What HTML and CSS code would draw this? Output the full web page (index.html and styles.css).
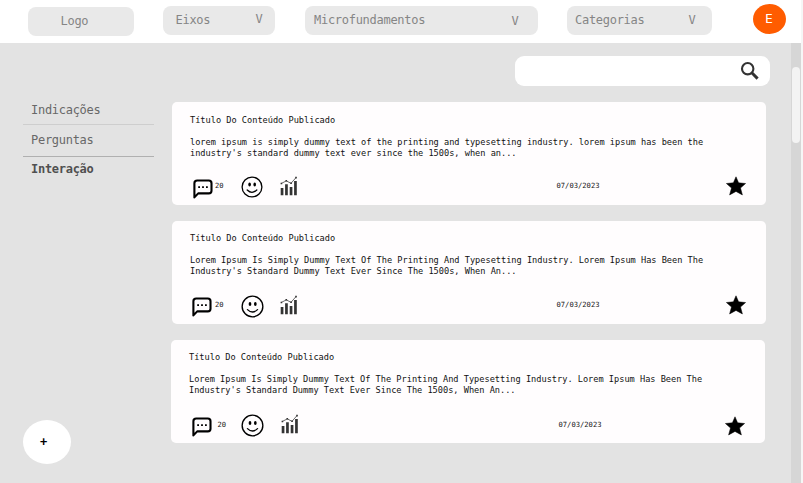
FILE: index.html
```html
<!DOCTYPE html>
<html lang="pt-BR">
<head>
<meta charset="utf-8">
<title>Interação</title>
<link rel="stylesheet" href="styles.css">
</head>
<body>
<svg class="symbols" aria-hidden="true">
  <symbol id="chat" viewBox="0 0 20 20"><path d="M1.4 18.4V4.2Q1.4 1.5 4.2 1.5H15.8Q18.5 1.5 18.5 4.2V11.8Q18.5 14.4 15.8 14.4H5.2Z" fill="none" stroke="#000" stroke-width="2.1" stroke-linejoin="round"/><path d="M5.2 7.2h1.8v1.8H5.200zM9.1 7.2h1.8v1.8H9.100zM13 7.2h1.8v1.8h-1.8z"/></symbol>
  <symbol id="smile" viewBox="0 0 22 22"><circle cx="11" cy="11" r="9.9" fill="none" stroke="#000" stroke-width="1.3"/><ellipse cx="8.6" cy="8.6" rx="1.3" ry="2"/><ellipse cx="13.7" cy="8.6" rx="1.3" ry="2"/><path d="M6.2 14Q11 18.7 15.8 14" fill="none" stroke="#000" stroke-width="1.3" stroke-linecap="round"/></symbol>
  <symbol id="chart" viewBox="0 0 18 20"><path d="M.7 12h2.7v7.2H.7zM5.1 8.300h2.7v10.9H5.1zM9.7 11h2.7v8.2H9.7zM14.1 5h2.7v14.2h-2.7z" fill="#333"/><path d="M1.2 7.500 6.3 4.9 11 7.300 16 1.6" fill="none" stroke="#444" stroke-width=".8"/><path d="M.6 6.800h1.6v1.5H.6zM5.5 4.1h1.6v1.5H5.5zM10.3 6.500h1.6v1.5h-1.6zM15.2 .8h1.6v1.6h-1.6z" fill="#333"/></symbol>
  <symbol id="star" viewBox="0 0 20 20"><path d="M10 .8 12.6 6.8 19.6 7.5 14.5 12 16.4 18.9 10 15.4 3.6 18.9 5.5 12 .4 7.5 7.4 6.8Z" stroke="#000" stroke-width=".5" stroke-linejoin="round"/></symbol>
</svg>
<header class="topbar">
  <div class="pill logo">Logo</div>
  <div class="pill eixos"><span>Eixos</span><span class="caret">V</span></div>
  <div class="pill micro"><span>Microfundamentos</span><span class="caret">V</span></div>
  <div class="pill categorias"><span>Categorias</span><span class="caret">V</span></div>
  <div class="avatar">E</div>
</header>
<div class="page">
  <aside class="sidebar">
    <nav>
      <a class="first">Indicações</a>
      <a class="second">Perguntas</a>
      <a class="active">Interação</a>
    </nav>
    <div class="add">+</div>
  </aside>
  <main class="content">
    <div class="search"><svg viewBox="0 0 20 20"><circle cx="7.7" cy="7.7" r="5.7" fill="none" stroke="#333" stroke-width="2.1"/><path d="M11.8 11.8 17.6 17.600" stroke="#333" stroke-width="3"/></svg></div>
    <article class="card top">
      <h2>Título Do Conteúdo Publicado</h2>
      <p>lorem ipsum is simply dummy text of the printing and typesetting industry. lorem ipsum has been the<br>industry's standard dummy text ever since the 1500s, when an...</p>
      <footer><svg class="chat"><use href="#chat"/></svg><span class="count">20</span><svg class="smile"><use href="#smile"/></svg><svg class="chart"><use href="#chart"/></svg><time>07/03/2023</time><svg class="star"><use href="#star"/></svg></footer>
    </article>
    <article class="card middle">
      <h2>Título Do Conteúdo Publicado</h2>
      <p>Lorem Ipsum Is Simply Dummy Text Of The Printing And Typesetting Industry. Lorem Ipsum Has Been The<br>Industry's Standard Dummy Text Ever Since The 1500s, When An...</p>
      <footer><svg class="chat"><use href="#chat"/></svg><span class="count">20</span><svg class="smile"><use href="#smile"/></svg><svg class="chart"><use href="#chart"/></svg><time>07/03/2023</time><svg class="star"><use href="#star"/></svg></footer>
    </article>
    <article class="card last">
      <h2>Título Do Conteúdo Publicado</h2>
      <p>Lorem Ipsum Is Simply Dummy Text Of The Printing And Typesetting Industry. Lorem Ipsum Has Been The<br>Industry's Standard Dummy Text Ever Since The 1500s, When An...</p>
      <footer><svg class="chat"><use href="#chat"/></svg><span class="count">20</span><svg class="smile"><use href="#smile"/></svg><svg class="chart"><use href="#chart"/></svg><time>07/03/2023</time><svg class="star"><use href="#star"/></svg></footer>
    </article>
  </main>
  <div class="track"><div class="thumb"></div></div>
</div>
</body>
</html>
```
FILE: styles.css
```css
* { box-sizing: border-box; }
body {
  margin: 0;
  width: 803px;
  height: 483px;
  overflow: hidden;
  background: #f6f6f6;
  font-family: "DejaVu Sans Mono", monospace;
  color: #111;
}
svg { display: block; flex: none; }
.symbols { width: 0; height: 0; position: absolute; }
.topbar {
  display: flex;
  align-items: flex-start;
  width: 801px;
  height: 43px;
  padding: 6px 0 0 27.5px;
  background: #fff;
}
.pill {
  display: flex;
  justify-content: space-between;
  height: 28.5px;
  border-radius: 8px;
  background: #e9e9e9;
  color: #858585;
  font-size: 12px;
  letter-spacing: -.28px;
  line-height: 29px;
}
.logo { width: 106.500px; margin: 1px 29px 0 0; padding-left: 33px; line-height: 28px; }
.eixos { width: 112px; margin-right: 29.500px; padding: 0 12.5px; }
.eixos .caret { line-height: 27px; }
.micro { width: 233px; margin-right: 29px; padding: 0 19px 0 9.5px; }
.categorias { width: 145.500px; margin-right: 40.500px; padding: 0 16.500px 0 8.500px; }
.micro .caret { line-height: 30px; }
.avatar {
  width: 33px;
  height: 30px;
  margin-top: -2.500px;
  border-radius: 50%;
  background: #ff5c00;
  color: #fff;
  font-size: 13px;
  line-height: 30px;
  text-align: center;
}
.page { display: flex; width: 801px; height: 440px; background: #e3e3e3; }
.sidebar {
  display: flex;
  flex-direction: column;
  justify-content: space-between;
  width: 171px;
  padding: 53px 17px 19px 23px;
}
.sidebar a {
  display: block;
  padding-left: 8px;
  color: #686868;
  font-size: 12px;
  letter-spacing: -.28px;
  line-height: 28px;
}
.sidebar .first { border-bottom: 1px solid #cecece; }
.sidebar .second { height: 32px; border-bottom: 1px solid #b0b0b0; line-height: 30px; }
.sidebar .active { color: #505050; font-weight: bold; line-height: 25px; }
.add {
  width: 48px;
  height: 44px;
  border-radius: 50%;
  background: #fff;
  color: #000;
  font-size: 12px;
  font-weight: bold;
  line-height: 44px;
  padding-left: 17px;
}
.content { width: 620px; padding-top: 13px; }
.search {
  display: flex;
  justify-content: flex-end;
  width: 255px;
  height: 30px;
  margin: 0 0 16px 344px;
  padding: 5px 10px 0 0;
  border-radius: 9px;
  background: #fff;
}
.search svg { width: 20px; height: 20px; }
.card {
  width: 593.500px;
  height: 103px;
  margin: 0 0 16px 1px;
  padding: 12px 0 0 18px;
  border-radius: 5px;
  background: #fffdfe;
}
.card h2, .card p { margin: 0; font-size: 8.62px; font-weight: normal; line-height: 11px; white-space: nowrap; }
.card h2 { margin-bottom: 11px; }
.card footer { display: flex; align-items: flex-start; padding-top: 16px; }
.top { padding-top: 13px; }
.chat { width: 20px; height: 20px; margin: 3.500px 0 0 2.500px; }
.count, time { font-size: 7.15px; line-height: 10px; }
.count { width: 9px; margin: 6px 0 0 2.500px; }
.smile { width: 22px; height: 22px; margin: 1px 0 0 17px; }
.chart { width: 18px; height: 20px; margin: 1px 0 0 17px; }
time { width: 44px; margin: 6px 0 0 258.500px; }
.star { width: 20px; height: 20px; margin: .5px 0 0 125px; }
.middle .chat { margin-left: 1.500px; }
.middle .count { margin: 7px 0 0 3.500px; }
.middle .smile { width: 23px; height: 23px; margin-top: 1.500px; }
.middle .chart { margin: 2px 0 0 16px; }
.middle time { margin-top: 7px; }
.middle .star { margin-top: 1.500px; }
.last { margin-left: 0; }
.last .chat { margin: 4.500px 0 0 2.500px; }
.last .count { margin: 8px 0 0 6px; }
.last .smile { width: 23px; height: 23px; margin: 1.500px 0 0 14px; }
.last .chart { margin: 2px 0 0 17px; }
.last time { margin: 8px 0 0 260px; }
.last .star { margin: 4px 0 0 122.500px; }
.track { width: 10px; padding: 24px 1px 0; background: #d6d6d6; }
.thumb { height: 76px; border-radius: 4px; background: #f3f3f3; }
```
